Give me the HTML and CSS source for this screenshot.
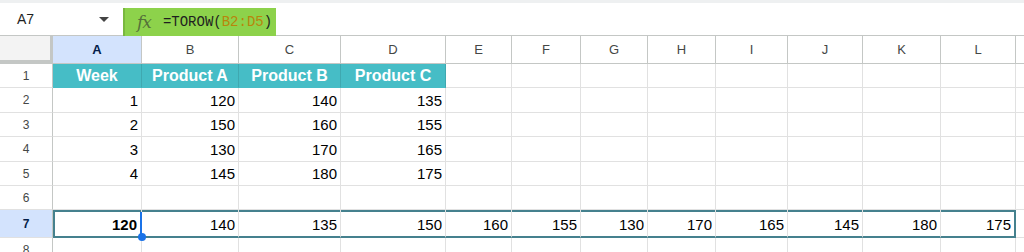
FILE: index.html
```html
<!DOCTYPE html>
<html>
<head>
<meta charset="utf-8">
<link rel="stylesheet" href="styles.css">
</head>
<body>
<div class="topbar">
  <div class="namebox">
    <span class="ref">A7</span>
    <span class="caret"></span>
  </div>
  <div class="formula">
    <span class="fx">fx</span>
    <span class="code">=TOROW(<span class="rng">B2:D5</span>)</span>
  </div>
  <div class="fill"></div>
</div>
<div class="grid">
  <div class="corner"></div>
  <div class="ch sel">A</div>
  <div class="ch">B</div>
  <div class="ch">C</div>
  <div class="ch">D</div>
  <div class="ch">E</div>
  <div class="ch">F</div>
  <div class="ch">G</div>
  <div class="ch">H</div>
  <div class="ch">I</div>
  <div class="ch">J</div>
  <div class="ch">K</div>
  <div class="ch">L</div>
  <div class="ch"></div>

  <div class="rh">1</div>
  <div class="c hd">Week</div><div class="c hd">Product A</div><div class="c hd">Product B</div><div class="c hd">Product C</div>
  <div class="c"></div><div class="c"></div><div class="c"></div><div class="c"></div><div class="c"></div><div class="c"></div><div class="c"></div><div class="c"></div><div class="c"></div>

  <div class="rh">2</div>
  <div class="c n">1</div><div class="c n">120</div><div class="c n">140</div><div class="c n">135</div>
  <div class="c"></div><div class="c"></div><div class="c"></div><div class="c"></div><div class="c"></div><div class="c"></div><div class="c"></div><div class="c"></div><div class="c"></div>

  <div class="rh">3</div>
  <div class="c n">2</div><div class="c n">150</div><div class="c n">160</div><div class="c n">155</div>
  <div class="c"></div><div class="c"></div><div class="c"></div><div class="c"></div><div class="c"></div><div class="c"></div><div class="c"></div><div class="c"></div><div class="c"></div>

  <div class="rh">4</div>
  <div class="c n">3</div><div class="c n">130</div><div class="c n">170</div><div class="c n">165</div>
  <div class="c"></div><div class="c"></div><div class="c"></div><div class="c"></div><div class="c"></div><div class="c"></div><div class="c"></div><div class="c"></div><div class="c"></div>

  <div class="rh">5</div>
  <div class="c n">4</div><div class="c n">145</div><div class="c n">180</div><div class="c n">175</div>
  <div class="c"></div><div class="c"></div><div class="c"></div><div class="c"></div><div class="c"></div><div class="c"></div><div class="c"></div><div class="c"></div><div class="c"></div>

  <div class="rh">6</div>
  <div class="c"></div><div class="c"></div><div class="c"></div><div class="c"></div>
  <div class="c"></div><div class="c"></div><div class="c"></div><div class="c"></div><div class="c"></div><div class="c"></div><div class="c"></div><div class="c"></div><div class="c"></div>

  <div class="rh sel">7</div>
  <div class="c n r7 first active"><b>120</b><span class="handle"></span></div><div class="c n r7">140</div><div class="c n r7">135</div><div class="c n r7">150</div>
  <div class="c n r7">160</div><div class="c n r7">155</div><div class="c n r7">130</div><div class="c n r7">170</div><div class="c n r7">165</div><div class="c n r7">145</div><div class="c n r7">180</div><div class="c n r7 last">175</div><div class="c"></div>

  <div class="rh">8</div>
  <div class="c"></div><div class="c"></div><div class="c"></div><div class="c"></div>
  <div class="c"></div><div class="c"></div><div class="c"></div><div class="c"></div><div class="c"></div><div class="c"></div><div class="c"></div><div class="c"></div><div class="c"></div>
</div>
</body>
</html>
```
FILE: styles.css
```css
* { box-sizing: border-box; }
html, body { margin: 0; padding: 0; background: #fff; overflow: hidden; }
body { font-family: "Liberation Sans", Arial, sans-serif; color: #000; width: 1024px; height: 252px; }

.topbar {
  display: flex;
  height: 36px;
  border-top: 3px solid #eef0f1;
}
.namebox {
  width: 123px;
  display: flex;
  align-items: center;
  justify-content: space-between;
  padding: 0 14px 0 17px;
  border-bottom: 1px solid #c4c7c5;
}
.ref { font-size: 14px; color: #1f1f1f; }
.caret {
  width: 0; height: 0;
  border-left: 5px solid transparent;
  border-right: 5px solid transparent;
  border-top: 5px solid #444;
}
.formula {
  width: 153px;
  height: 28px;
  margin-top: 5px;
  background: #8dd24b;
  display: flex;
  align-items: center;
  border-left: 2px solid #79b83f;
  padding-left: 12px;
  gap: 12px;
}
.fx {
  font-family: "DejaVu Serif", "Liberation Serif", serif;
  font-style: italic;
  font-size: 17px;
  color: #55703a;
  letter-spacing: -1px;
}
.code {
  font-family: "Liberation Mono", "Courier New", monospace;
  font-size: 14px;
  color: #1f1f1f;
}
.rng { color: #b8860b; }
.fill { flex: 1; border-bottom: 1px solid #c4c7c5; }

.grid {
  display: grid;
  grid-template-columns: 53px 89px 97px 102px 105px 66px 69px 67px 68px 72px 75px 78px 75px 60px;
  grid-template-rows: 28px 24px 25px 24px 25px 24px 24px 28px 24px;
}
.corner {
  background: #f3f3f3;
  border-right: 3px solid #c4c7c5;
  border-bottom: 4px solid #c4c7c5;
}
.ch {
  display: flex;
  align-items: center;
  justify-content: center;
  font-size: 13px;
  color: #444746;
  border-right: 1px solid #c4c7c5;
  border-bottom: 1px solid #c4c7c5;
}
.ch.sel { background: #d3e3fd; color: #041e49; font-weight: bold; }
.rh {
  display: flex;
  align-items: center;
  justify-content: center;
  font-size: 12px;
  color: #444746;
  border-right: 1px solid #c4c7c5;
  border-bottom: 1px solid #e1e1e1;
}
.rh.sel { background: #d3e3fd; color: #041e49; font-weight: bold; }
.c {
  position: relative;
  border-right: 1px solid #e1e1e1;
  border-bottom: 1px solid #e1e1e1;
  font-size: 15px;
  display: flex;
  align-items: center;
}
.hd {
  background: #46bdc6;
  color: #fff;
  font-weight: bold;
  font-size: 16px;
  justify-content: center;
  border-right-color: #3fa8b0;
  border-bottom-color: #46bdc6;
}
.n { justify-content: flex-end; padding-right: 3px; color: #000; }
.r7 {
  padding-top: 3px;
  border-bottom: 2px solid #45818e;
  box-shadow: inset 0 2px 0 #45818e;
}
.r7.first { box-shadow: inset 0 2px 0 #45818e, inset 2px 0 0 #45818e; }
.r7.last { border-right: 2px solid #45818e; }
.active { padding-right: 4px; }
.active::after {
  content: "";
  position: absolute;
  right: -1px;
  top: 2px;
  bottom: 0;
  width: 2px;
  background: #1a73e8;
  z-index: 2;
}
.handle {
  position: absolute;
  right: -5px;
  bottom: -5px;
  width: 8px;
  height: 8px;
  border-radius: 50%;
  background: #1a73e8;
  z-index: 3;
}
```
